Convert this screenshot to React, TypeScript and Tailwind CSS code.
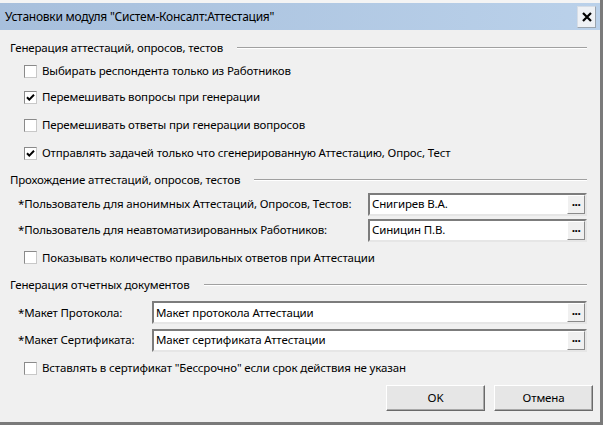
import React from "react";

function CheckBox({ checked }: { checked?: boolean }) {
  return (
    <span className="relative inline-block w-[13px] h-[13px] bg-white border border-[#8a8a8a] border-r-[#c8c8c8] border-b-[#c8c8c8] shrink-0">
      {checked && (
        <svg viewBox="0 0 11 11" className="absolute left-0 top-0 w-[11px] h-[11px]">
          <path d="M2 5.2 L4.3 7.6 L9 2.8" fill="none" stroke="#000" strokeWidth="2" />
        </svg>
      )}
    </span>
  );
}

function CheckRow({ label, checked, h }: { label: string; checked?: boolean; h: string }) {
  return (
    <div className={`flex items-center pl-[24px] gap-[5px] ${h}`}>
      <CheckBox checked={checked} />
      <span>{label}</span>
    </div>
  );
}

function Heading({ text, h }: { text: string; h: string }) {
  return (
    <div className={`flex items-center pl-[10px] pr-[13px] gap-[14px] ${h}`}>
      <span className="whitespace-nowrap">{text}</span>
      <div className="flex-1 h-[2px] border-t border-[#a0a0a0] border-b border-b-white" />
    </div>
  );
}

function FieldRow({
  label,
  value,
  width,
  h,
}: {
  label: string;
  value: string;
  width: string;
  h: string;
}) {
  return (
    <div className={`flex items-center pl-[18px] pr-[13px] ${h}`}>
      <span className="whitespace-nowrap flex-1">{label}</span>
      <div
        className={`flex items-center h-[23px] ${width} bg-white border-2 border-t-[#7c7c7c] border-l-[#7c7c7c] border-b-[#e6e6e6] border-r-[#e6e6e6]`}
      >
        <span className="flex-1 pl-[2px] whitespace-nowrap overflow-hidden">{value}</span>
        <span className="flex items-center justify-center w-[18px] h-[19px] bg-[#f0f0f0] border border-t-white border-l-white border-b-[#8a8a8a] border-r-[#8a8a8a] text-[12px] font-bold leading-none pb-[4px] tracking-[-0.5px]">
          ...
        </span>
      </div>
    </div>
  );
}

export default function App() {
  return (
    <div className="w-[603px] h-[425px] bg-[#f0f0f0] text-[11.5px] tracking-[-0.15px] text-black font-['Noto_Sans',sans-serif] flex flex-col border-r-[3px] border-b-[3px] border-r-[#7a7a7a] border-b-[#7a7a7a] overflow-hidden">
      {/* Заголовок окна */}
      <div className="pt-[3px] bg-[#f4f4f4]">
        <div className="flex items-center h-[27px] pl-[5px] pr-[4px] bg-gradient-to-r from-[#a7bfdc] to-[#bad1ea]">
          <span className="flex-1 text-[12px] tracking-[-0.25px]">Установки модуля "Систем-Консалт:Аттестация"</span>
          <span className="flex items-center justify-center w-[19px] h-[22px] bg-[#eef1f5] border border-[#d6dde6] border-b-[#9aa4ae] border-r-[#9aa4ae]">
            <svg viewBox="0 0 10 10" className="w-[10px] h-[10px]">
              <path d="M1 1 L9 9 M9 1 L1 9" stroke="#000" strokeWidth="2.2" />
            </svg>
          </span>
        </div>
      </div>

      <div className="flex flex-col pt-[7px]">
        <Heading text="Генерация аттестаций, опросов, тестов" h="h-[22px]" />
        <CheckRow label="Выбирать респондента только из Работников" h="h-[24px]" />
        <CheckRow label="Перемешивать вопросы при генерации" checked h="h-[28px]" />
        <CheckRow label="Перемешивать ответы при генерации вопросов" h="h-[28px]" />
        <CheckRow
          label="Отправлять задачей только что сгенерированную Аттестацию, Опрос, Тест"
          checked
          h="h-[28px]"
        />

        <Heading text="Прохождение аттестаций, опросов, тестов" h="h-[25px]" />
        <FieldRow
          label="*Пользователь для анонимных Аттестаций, Опросов, Тестов:"
          value="Снигирев В.А."
          width="w-[219px]"
          h="h-[24px]"
        />
        <FieldRow
          label="*Пользователь для неавтоматизированных Работников:"
          value="Синицин П.В."
          width="w-[219px]"
          h="h-[28px]"
        />
        <CheckRow label="Показывать количество правильных ответов при Аттестации" h="h-[27px]" />

        <Heading text="Генерация отчетных документов" h="h-[28px]" />
        <FieldRow
          label="*Макет Протокола:"
          value="Макет протокола Аттестации"
          width="w-[435px]"
          h="h-[27px]"
        />
        <FieldRow
          label="*Макет Сертификата:"
          value="Макет сертификата Аттестации"
          width="w-[435px]"
          h="h-[28px]"
        />
        <CheckRow
          label={'Вставлять в сертификат "Бессрочно" если срок действия не указан'}
          h="h-[28px]"
        />

        <div className="flex justify-end gap-[9px] pr-[7px] mt-[3px]">
          <button className="w-[99px] h-[26px] bg-[#e6e6e6] border border-t-white border-l-white border-b-[#6a6a6a] border-r-[#6a6a6a] shadow-[inset_-1px_-1px_0_#a8a8a8]">
            OK
          </button>
          <button className="w-[99px] h-[26px] bg-[#e6e6e6] border border-t-white border-l-white border-b-[#6a6a6a] border-r-[#6a6a6a] shadow-[inset_-1px_-1px_0_#a8a8a8]">
            Отмена
          </button>
        </div>
      </div>
    </div>
  );
}
